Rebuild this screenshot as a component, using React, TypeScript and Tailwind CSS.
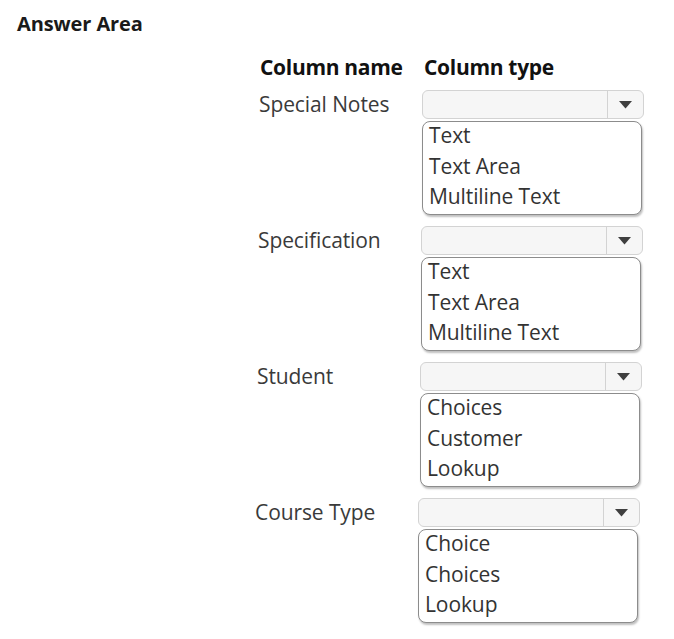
import React from 'react';

type Row = {
  name: string;
  options: string[];
  shift: string;
};

const rows: Row[] = [
  { name: 'Special Notes', options: ['Text', 'Text Area', 'Multiline Text'], shift: 'ml-[4px]' },
  { name: 'Specification', options: ['Text', 'Text Area', 'Multiline Text'], shift: 'ml-[3px]' },
  { name: 'Student', options: ['Choices', 'Customer', 'Lookup'], shift: 'ml-[2px]' },
  { name: 'Course Type', options: ['Choice', 'Choices', 'Lookup'], shift: 'ml-0' },
];

const Dropdown: React.FC = () => (
  <div className="flex h-[29px] w-[222px] rounded-md border border-[#d3d3d3] bg-[#f6f6f6]">
    <div className="flex-1" />
    <div className="flex w-[36px] items-center justify-center border-l border-[#d3d3d3]">
      <svg width="13" height="8" viewBox="0 0 13 8">
        <path d="M0 0 L13 0 L6.5 7.5 Z" fill="#3f3f3f" />
      </svg>
    </div>
  </div>
);

const App: React.FC = () => {
  return (
    <div className="min-h-screen bg-white font-['Open_Sans',sans-serif] text-[#333]">
      <div className="pl-[17px] pt-[12px] text-[20px] leading-[24px] font-bold tracking-[-0.1px] text-[#1a1a1a]">Answer Area</div>

      <div className="ml-[255px] mt-[18px]">
        <div className="flex text-[21px] leading-[26px] font-bold text-[#111] tracking-[-0.3px]">
          <span className="ml-[5px] w-[164px]">Column name</span>
          <span>Column type</span>
        </div>

        <div className="mt-[10px] flex flex-col gap-[11px]">
          {rows.map((row) => (
            <div key={row.name} className={`flex ${row.shift}`}>
              <div className="flex h-[29px] w-[163px] items-center text-[21px] tracking-[-0.1px] text-[#3a3a3a]">
                {row.name}
              </div>
              <div className="flex flex-col gap-[2px]">
                <Dropdown />
                <div className="flex h-[94px] w-[220px] flex-col rounded-lg border border-[#8c8c8c] bg-white pl-[6px] shadow-[1px_2px_2px_rgba(0,0,0,0.25)]">
                  {row.options.map((opt) => (
                    <div key={opt} className="h-[31px] text-[21px] leading-[26px] tracking-[-0.1px] text-[#333]">
                      {opt}
                    </div>
                  ))}
                </div>
              </div>
            </div>
          ))}
        </div>
      </div>
    </div>
  );
};

export default App;
